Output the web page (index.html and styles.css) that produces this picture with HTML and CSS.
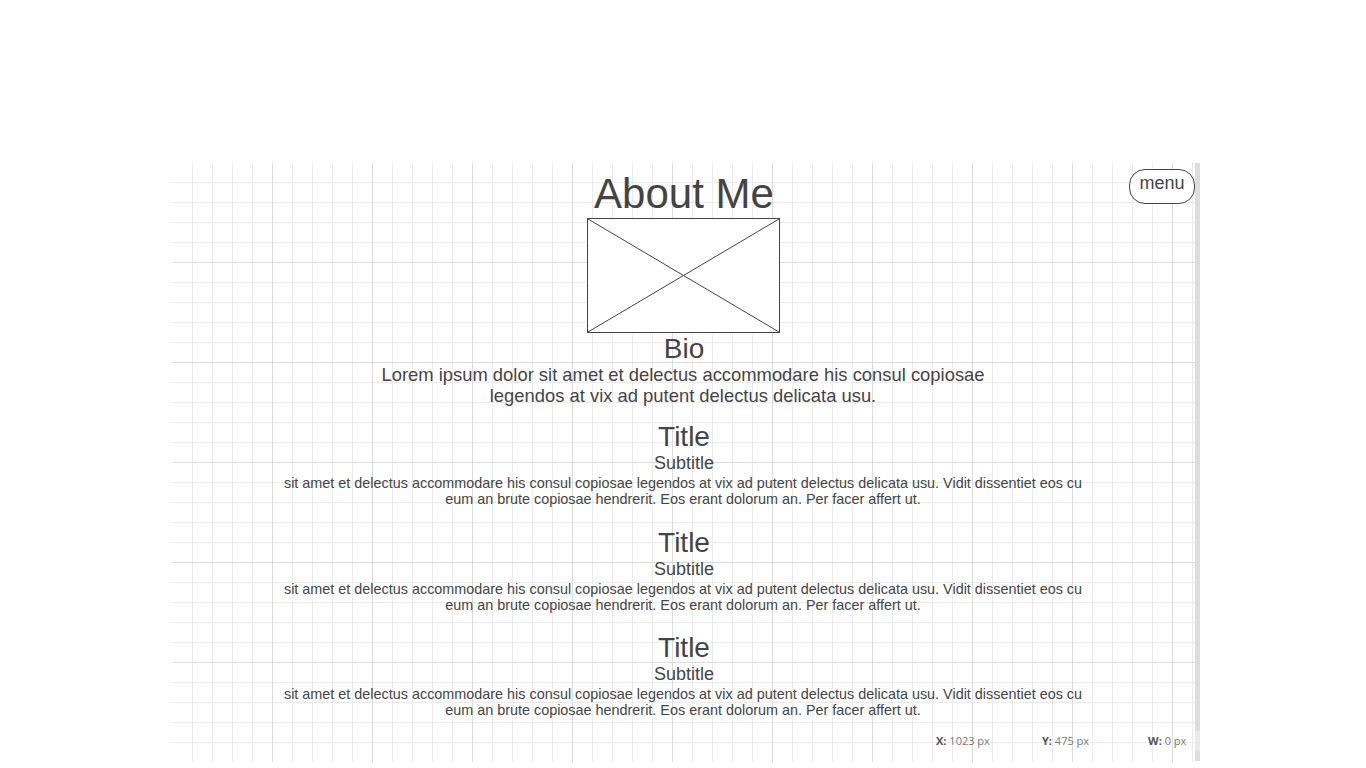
FILE: index.html
```html
<!DOCTYPE html>
<html lang="en">
<head>
<meta charset="utf-8">
<title>About Me</title>
<link rel="stylesheet" href="styles.css">
</head>
<body>
<div class="page">
  <div class="stage">
    <main class="canvas">
      <button class="menu" type="button">menu</button>
      <h1 class="page-title">About Me</h1>
      <div class="placeholder">
        <svg class="placeholder-x" viewBox="0 0 191 113" preserveAspectRatio="none" aria-hidden="true">
          <line x1="0" y1="0" x2="191" y2="113"></line>
          <line x1="191" y1="0" x2="0" y2="113"></line>
        </svg>
      </div>
      <h2 class="bio-title">Bio</h2>
      <p class="bio-text">Lorem ipsum dolor sit amet et delectus accommodare his consul copiosae legendos at vix ad putent delectus delicata usu.</p>
      <div class="entries">
        <section class="entry">
          <h3 class="entry-title">Title</h3>
          <h4 class="entry-subtitle">Subtitle</h4>
          <p class="entry-text">sit amet et delectus accommodare his consul copiosae legendos at vix ad putent delectus delicata usu. Vidit dissentiet eos cu eum an brute copiosae hendrerit. Eos erant dolorum an. Per facer affert ut.</p>
        </section>
        <section class="entry">
          <h3 class="entry-title">Title</h3>
          <h4 class="entry-subtitle">Subtitle</h4>
          <p class="entry-text">sit amet et delectus accommodare his consul copiosae legendos at vix ad putent delectus delicata usu. Vidit dissentiet eos cu eum an brute copiosae hendrerit. Eos erant dolorum an. Per facer affert ut.</p>
        </section>
        <section class="entry">
          <h3 class="entry-title">Title</h3>
          <h4 class="entry-subtitle">Subtitle</h4>
          <p class="entry-text">sit amet et delectus accommodare his consul copiosae legendos at vix ad putent delectus delicata usu. Vidit dissentiet eos cu eum an brute copiosae hendrerit. Eos erant dolorum an. Per facer affert ut.</p>
        </section>
      </div>
      <footer class="status">
        <span class="status-item"><b>X:</b> 1023 px</span>
        <span class="status-item"><b>Y:</b> 475 px</span>
        <span class="status-item status-last"><b>W:</b> 0 px</span>
      </footer>
    </main>
    <div class="scrollbar"></div>
  </div>
</div>
</body>
</html>
```

FILE: styles.css
```css
* {
  box-sizing: border-box;
}

html, body {
  margin: 0;
  padding: 0;
  background: #ffffff;
}

body {
  font-family: "Liberation Sans", Arial, sans-serif;
  color: #444444;
}

.page {
  padding: 162px 0 0 172px;
}

.stage {
  display: flex;
  height: 600px;
  width: 1028px;
}

.canvas {
  position: relative;
  width: 1023px;
  height: 600px;
  display: flex;
  flex-direction: column;
  align-items: center;
  border-top: 1px solid transparent;
  border-left: 1px solid transparent;
  background-color: #ffffff;
  background-image:
    linear-gradient(to right, transparent 99px, #dcdcdc 99px, #dcdcdc 100px),
    linear-gradient(to bottom, transparent 99px, #dcdcdc 99px, #dcdcdc 100px),
    linear-gradient(to right, transparent 19px, #ebebeb 19px, #ebebeb 20px),
    linear-gradient(to bottom, transparent 19px, #ebebeb 19px, #ebebeb 20px);
  background-size: 100px 100px, 100px 100px, 20px 20px, 20px 20px;
  background-origin: padding-box;
  background-clip: padding-box;
}

.scrollbar {
  width: 5px;
  height: 598px;
  margin-top: 1px;
  background: linear-gradient(to bottom, #dddddd 0, #dddddd 568px, #e9e9e9 568px, #e9e9e9 588px, #dddddd 588px);
}

.menu {
  position: absolute;
  top: 6px;
  left: 956px;
  width: 66px;
  height: 35px;
  padding: 3px 0 0;
  border: 1px solid #444444;
  border-radius: 16px;
  background: #ffffff;
  color: #444444;
  font-family: "Liberation Sans", Arial, sans-serif;
  font-size: 18px;
  line-height: 20px;
  text-align: center;
  display: flex;
  justify-content: center;
  align-items: flex-start;
}

.page-title {
  margin: 7px 0 0;
  font-size: 42px;
  line-height: 48px;
  font-weight: normal;
}

.placeholder {
  width: 193px;
  height: 115px;
  margin-right: 2px;
  border: 1px solid #444444;
  background: #ffffff;
  display: flex;
}

.placeholder-x {
  width: 100%;
  height: 100%;
  display: block;
}

.placeholder-x line {
  stroke: #444444;
  stroke-width: 1;
  vector-effect: non-scaling-stroke;
}

.bio-title {
  margin: 2px 0 0;
  font-size: 28px;
  line-height: 28px;
  font-weight: normal;
}

.bio-text {
  margin: 1px 2px 0 0;
  max-width: 640px;
  font-size: 18.4px;
  line-height: 21px;
  text-align: center;
}

.entries {
  margin-top: 17px;
  display: flex;
  flex-direction: column;
  align-items: center;
  gap: 21.5px;
}

.entry {
  display: flex;
  flex-direction: column;
  align-items: center;
}

.entry-title {
  margin: 0;
  font-size: 28px;
  line-height: 28px;
  font-weight: normal;
}

.entry-subtitle {
  margin: 2px 0 0;
  font-size: 18px;
  line-height: 20px;
  font-weight: normal;
}

.entry-text {
  margin: 2px 2px 0 0;
  max-width: 815px;
  font-size: 14.4px;
  line-height: 16px;
  text-align: center;
}

.status {
  margin-top: auto;
  align-self: stretch;
  display: flex;
  padding: 0 0 14px 763px;
  font-family: "Open Sans", sans-serif;
  font-size: 11px;
  line-height: 14px;
  color: #7a7a7a;
}

.status-item {
  width: 106px;
  flex: none;
}

.status-item b {
  color: #555555;
  font-weight: bold;
}

.status-last {
  width: auto;
}
```
